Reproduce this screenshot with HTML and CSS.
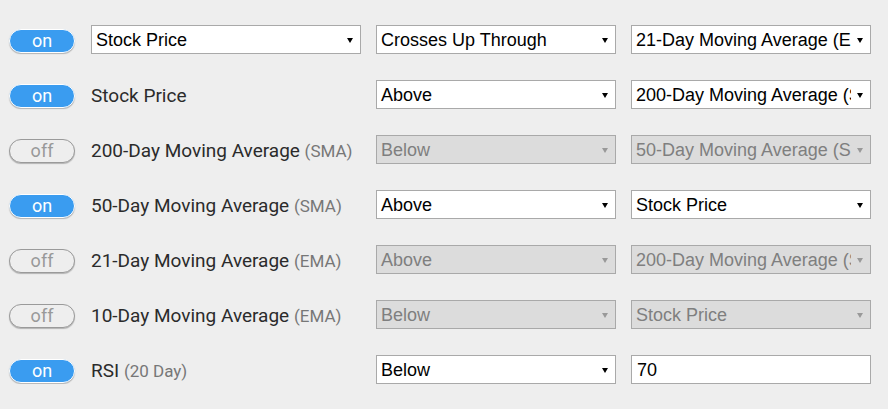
FILE: index.html
```html
<!DOCTYPE html>
<html>
<head>
<meta charset="utf-8">
<link rel="stylesheet" href="styles.css">
</head>
<body>
<div class="rules">
  <div class="row">
    <div class="toggle on">on</div>
    <div class="sel wide"><span class="val">Stock Price</span><span class="arrow"></span></div>
    <div class="sel"><span class="val">Crosses Up Through</span><span class="arrow"></span></div>
    <div class="sel"><span class="val">21-Day Moving Average (EMA)</span><span class="arrow"></span></div>
  </div>
  <div class="row">
    <div class="toggle on">on</div>
    <div class="label">Stock Price</div>
    <div class="sel"><span class="val">Above</span><span class="arrow"></span></div>
    <div class="sel"><span class="val">200-Day Moving Average (SMA)</span><span class="arrow"></span></div>
  </div>
  <div class="row">
    <div class="toggle off">off</div>
    <div class="label">200-Day Moving Average <small>(SMA)</small></div>
    <div class="sel disabled"><span class="val">Below</span><span class="arrow"></span></div>
    <div class="sel disabled"><span class="val">50-Day Moving Average (SMA)</span><span class="arrow"></span></div>
  </div>
  <div class="row">
    <div class="toggle on">on</div>
    <div class="label">50-Day Moving Average <small>(SMA)</small></div>
    <div class="sel"><span class="val">Above</span><span class="arrow"></span></div>
    <div class="sel"><span class="val">Stock Price</span><span class="arrow"></span></div>
  </div>
  <div class="row">
    <div class="toggle off">off</div>
    <div class="label">21-Day Moving Average <small>(EMA)</small></div>
    <div class="sel disabled"><span class="val">Above</span><span class="arrow"></span></div>
    <div class="sel disabled"><span class="val">200-Day Moving Average (SMA)</span><span class="arrow"></span></div>
  </div>
  <div class="row">
    <div class="toggle off">off</div>
    <div class="label">10-Day Moving Average <small>(EMA)</small></div>
    <div class="sel disabled"><span class="val">Below</span><span class="arrow"></span></div>
    <div class="sel disabled"><span class="val">Stock Price</span><span class="arrow"></span></div>
  </div>
  <div class="row">
    <div class="toggle on">on</div>
    <div class="label">RSI <small>(20 Day)</small></div>
    <div class="sel"><span class="val">Below</span><span class="arrow"></span></div>
    <div class="input">70</div>
  </div>
</div>
</body>
</html>
```
FILE: styles.css
```css
html, body {
  margin: 0;
  padding: 0;
  background: #eeeeee;
}
.rules {
  padding: 25px 0 0 9px;
  display: flex;
  flex-direction: column;
  gap: 26px;
}
.row {
  display: flex;
  align-items: center;
  height: 29px;
}
.toggle {
  box-sizing: border-box;
  width: 66px;
  height: 24px;
  margin-right: 16px;
  align-self: flex-end;
  margin-bottom: 1px;
  border-radius: 12px;
  font-family: Roboto, sans-serif;
  font-size: 18px;
  line-height: 22px;
  text-align: center;
  box-shadow: 0 1px 1px rgba(0,0,0,0.25);
}
.toggle.on {
  background: #3a9cf0;
  border: 1px solid #ffffff;
  color: #ffffff;
}
.toggle.off {
  background: #eeeeee;
  border: 1px solid #9a9a9a;
  color: #999999;
}
.label {
  width: 270px;
  margin-right: 15px;
  padding-top: 1px;
  font-family: Roboto, sans-serif;
  font-size: 19px;
  color: #2b2b2b;
  white-space: nowrap;
}
.label small {
  font-size: 17px;
  color: #777777;
}
.sel, .input {
  box-sizing: border-box;
  width: 240px;
  height: 29px;
  border: 1px solid #a9a9a9;
  background: #ffffff;
  display: flex;
  align-items: center;
  padding-top: 1px;
  font-family: "Liberation Sans", Arial, sans-serif;
  font-size: 18px;
  color: #000000;
  margin-right: 15px;
}
.sel.wide {
  width: 270px;
}
.sel .val {
  flex: 1;
  overflow: hidden;
  white-space: nowrap;
  padding-left: 4px;
}
.sel .arrow {
  width: 0;
  height: 0;
  border-left: 3px solid transparent;
  border-right: 3px solid transparent;
  border-top: 5px solid #000000;
  margin: 0 7px 0 6px;
}
.sel.disabled {
  background: #dcdcdc;
  color: #7f7f7f;
}
.sel.disabled .arrow {
  border-top-color: #999999;
}
.input {
  padding-left: 5px;
}
```
